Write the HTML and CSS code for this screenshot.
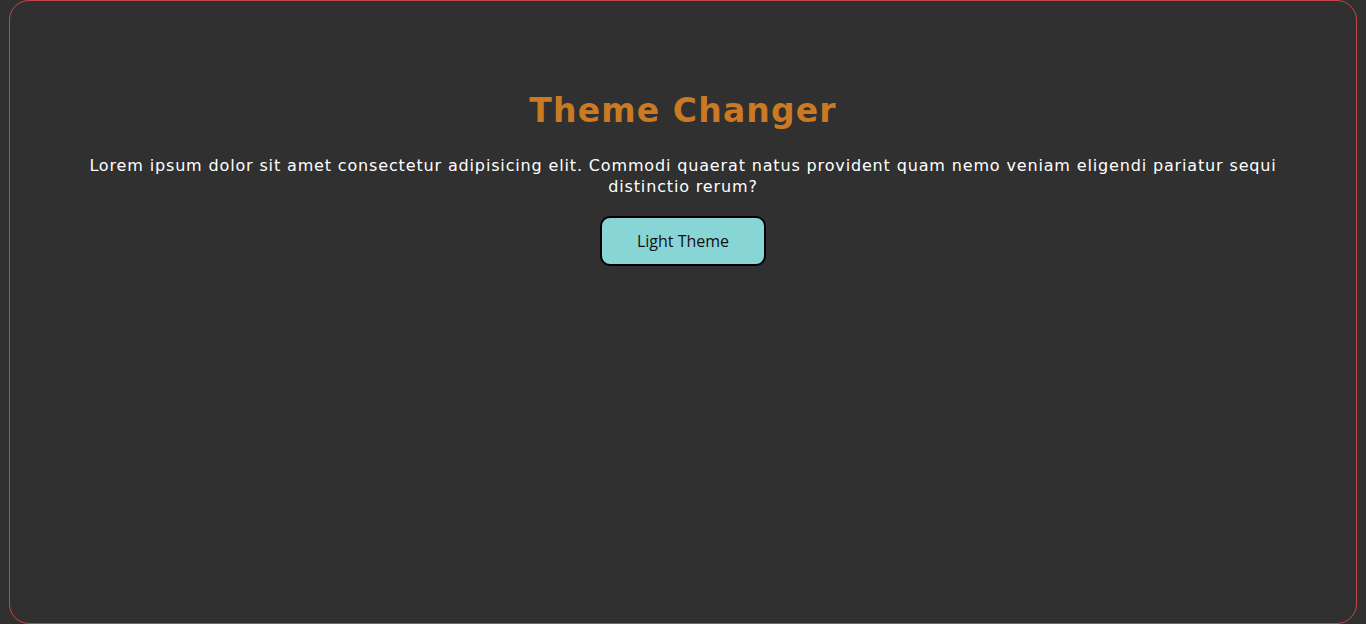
FILE: index.html
```html
<!DOCTYPE html>
<html lang="en">
<head>
<meta charset="utf-8">
<title>Theme Changer</title>
<link rel="stylesheet" href="styles.css">
</head>
<body>
<div class="container">
  <h1 class="title">Theme Changer</h1>
  <p class="text">Lorem ipsum dolor sit amet consectetur adipisicing elit. Commodi quaerat natus provident quam nemo veniam eligendi pariatur sequi distinctio rerum?</p>
  <button class="theme-btn">Light Theme</button>
</div>
</body>
</html>
```
FILE: styles.css
```css
html, body {
  margin: 0;
  padding: 0;
  background: #303030;
}
body {
  padding: 0 9px;
  font-family: "DejaVu Sans", Verdana, sans-serif;
}
.container {
  box-sizing: border-box;
  height: 624px;
  border: 1px solid #c8464b;
  border-radius: 20px;
  background: #303030;
  display: flex;
  flex-direction: column;
  align-items: center;
  padding: 90px 70px 0;
  text-align: center;
}
.title {
  margin: 0;
  font-size: 33px;
  font-weight: bold;
  letter-spacing: 1.15px;
  color: #c97a22;
  line-height: 40px;
}
.text {
  margin: 24px 0 19px;
  font-size: 16px;
  letter-spacing: 0.85px;
  line-height: 21px;
  color: #ffffff;
}
.theme-btn {
  width: 166px;
  height: 50px;
  border: 2px solid #000;
  border-radius: 10px;
  background: #87d5d5;
  color: #111;
  font-family: "Open Sans", sans-serif;
  font-size: 16px;
  cursor: pointer;
}
```
